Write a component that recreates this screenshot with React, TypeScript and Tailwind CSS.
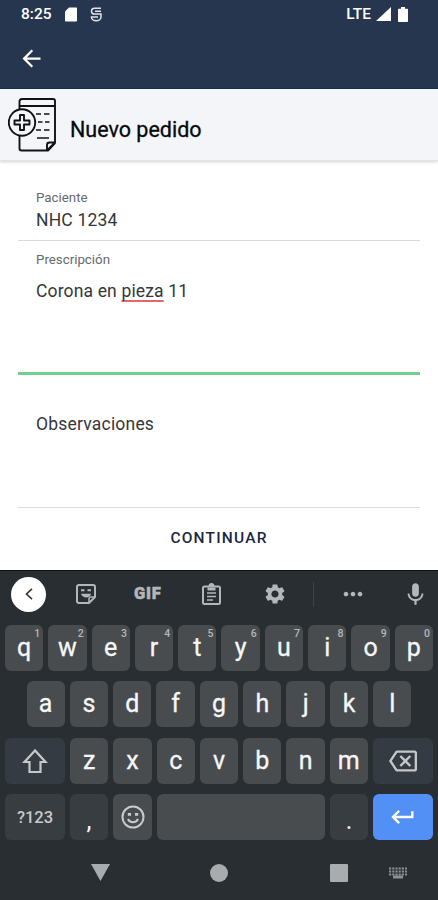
import type { ReactNode } from "react";
import { MdArrowBack, MdKeyboardReturn, MdMic, MdMoreHoriz, MdOutlineBackspace, MdSettings } from "react-icons/md";

const TOP_ROW = ["q", "w", "e", "r", "t", "y", "u", "i", "o", "p"];
const HOME_ROW = ["a", "s", "d", "f", "g", "h", "j", "k", "l"];
const BOTTOM_ROW = ["z", "x", "c", "v", "b", "n", "m"];

function StatusBar() {
  return (
    <div className="flex h-7 items-center pl-[21px] pr-[30px] text-white">
      <span className="w-[31px] whitespace-nowrap text-[15.500px] font-medium leading-7">8:25</span>
      <svg viewBox="0 0 12 15" className="ml-[13px] h-[15px] w-3" fill="currentColor" aria-hidden="true">
        <path d="M4 .5h7c.6 0 1 .4 1 1v12c0 .6-.4 1-1 1H1c-.6 0-1-.4-1-1v-9z" />
      </svg>
      <svg viewBox="0 0 12 15" className="ml-[13px] h-[15px] w-3" fill="none" stroke="#dfe3e8" strokeWidth="1.500" aria-hidden="true">
        <path d="M11 1.200H4.500a3 3 0 0 0-3 3c0 1.800 1.300 2.900 3 2.900H11v2.700c0 2.400-2.200 4-4.800 4s-4.800-1.500-4.800-3.800H8M11 4.200H5" />
      </svg>
      <span className="ml-auto text-[15.500px] font-medium leading-7">LTE</span>
      <svg viewBox="0 0 15 14" className="ml-[5px] h-3.5 w-[15px]" fill="currentColor" aria-hidden="true">
        <path d="M15 0v14H0z" />
      </svg>
      <svg viewBox="0 0 10 15" className="ml-[7px] h-[15px] w-2.5" fill="currentColor" aria-hidden="true">
        <path d="M3 0h4v1.700h2c.6 0 1 .4 1 1V14c0 .6-.4 1-1 1H1c-.6 0-1-.4-1-1V2.700c0-.6.4-1 1-1h2z" />
      </svg>
    </div>
  );
}

function OrderIcon() {
  return (
    <svg viewBox="0 0 48 54" className="h-[54px] w-12 shrink-0" fill="none" stroke="#111216" strokeWidth="1.9" strokeLinejoin="round" aria-hidden="true">
      <path d="M11.500 11V3.500C11.500 2 12.300 1 14 1h31c1.500 0 2 .8 2 2v42l-7 7.500H13.500c-1.500 0-2-.8-2-2V37" />
      <path d="M11.500 8H47M39 52.500V47c0-1.800.7-2.500 2.500-2.500H47M40 51.500l6.500-6.500" />
      <path d="M28 16h5M36 16h5.500M30 24h4.500M37 24h4.500M28 32h5M36 32h5.500M29 40h12" strokeWidth="1.7" />
      <circle cx="14" cy="24.500" r="13.200" fill="#f4f5f9" />
      <path d="M12 17h4v5.500h5.500v4H16V32h-4v-5.500H6.500v-4H12z" />
    </svg>
  );
}

function Key({ children, hint, className = "bg-[#484c4f]" }: { children?: ReactNode; hint?: string; className?: string }) {
  return (
    <div className={`relative flex h-[46px] min-w-0 flex-[38.5_1_0] items-center justify-center rounded-[6px] text-[25px] text-[#f5f6f7] ${className}`}>
      {children}
      {hint && <span className="absolute right-[3px] top-[3px] text-[10.500px] font-medium leading-[12px] text-[#b5b8ba]">{hint}</span>}
    </div>
  );
}

function Letter({ char, hint }: { char: string; hint?: string }) {
  return (
    <Key hint={hint}>
      <span className="-mt-[1px] text-[25px] leading-none [-webkit-text-stroke:0.3px_#f5f6f7]">{char}</span>
    </Key>
  );
}

function Toolbar() {
  return (
    <div className="flex h-[54px] items-center pb-[8px] pl-[11px] text-[#b3b7b9]">
      <div className="flex size-[35px] items-center justify-center rounded-full bg-white">
        <svg viewBox="0 0 8 12" className="h-3 w-2" fill="none" stroke="#303437" strokeWidth="1.6" aria-hidden="true">
          <path d="M7 .8 1.500 6 7 11.200" />
        </svg>
      </div>
      <svg viewBox="0 0 20 20" className="ml-[30px] size-5" fill="none" stroke="currentColor" strokeWidth="2" strokeLinejoin="round" aria-hidden="true">
        <path d="M3 1h14a2 2 0 0 1 2 2v10l-6 6H3a2 2 0 0 1-2-2V3a2 2 0 0 1 2-2z" />
        <path d="M13 19v-4a2 2 0 0 1 2-2h4" strokeWidth="1.500" />
        <path d="M5 6.200h3.500M11.500 6.200H15" strokeWidth="2" />
        <path d="M5 9.800h10c-.8 5-8.500 5-10 0z" fill="currentColor" stroke="none" />
      </svg>
      <span className="ml-[38px] w-[29px] text-[16.500px] font-black leading-5 tracking-[0.8px] [-webkit-text-stroke:0.5px_#b3b7b9]">GIF</span>
      <svg viewBox="0 0 19 22" className="ml-[39px] h-[22px] w-[19px]" fill="none" stroke="currentColor" strokeWidth="2" aria-hidden="true">
        <rect x="1" y="3.500" width="17" height="17.500" rx="1.500" />
        <path d="M5.500 6h8" strokeWidth="3" />
        <path d="M9.500 0a3 3 0 0 1 3 3.500h-6a3 3 0 0 1 3-3.500z" fill="currentColor" stroke="none" />
        <path d="M5 10h9M5 13.500h9M5 17h6" strokeWidth="1.700" />
      </svg>
      <MdSettings className="ml-[42px] size-6" />
      <span className="ml-[26px] h-[25px] w-px bg-[#3d4245]" />
      <MdMoreHoriz className="ml-[25px] size-7" />
      <MdMic className="ml-[35px] size-[27px]" />
    </div>
  );
}

function NavBar() {
  return (
    <div className="mt-[24px] flex h-[18px] items-center pl-[91px] text-[#a9acae]">
      <svg viewBox="0 0 19 17" className="h-[17px] w-[19px]" fill="currentColor" aria-hidden="true">
        <path d="M0 0h19L9.500 17z" />
      </svg>
      <span className="ml-[100px] size-[18px] rounded-full bg-current" />
      <span className="ml-[102px] size-[18px] rounded-[1px] bg-current" />
      <svg viewBox="0 0 18 12" className="ml-[41px] h-3 w-[18px]" fill="none" stroke="#8c9092" aria-hidden="true">
        <path d="M0 1.500h18M0 4.500h18M0 7.500h18" strokeWidth="2" strokeDasharray="2.200 1" />
        <path d="M4 10h10" strokeWidth="3" />
      </svg>
    </div>
  );
}

function Keyboard() {
  return (
    <div className="h-[330px] border-t border-[#0b0e10] bg-[#292e32]">
      <Toolbar />
      <div className="flex flex-col gap-[10.300px] px-[5px]">
        <div className="flex gap-[5px]">
          {TOP_ROW.map((char, i) => (
            <Letter key={char} char={char} hint={String((i + 1) % 10)} />
          ))}
        </div>
        <div className="flex gap-[5px] px-[21.500px]">
          {HOME_ROW.map((char) => (
            <Letter key={char} char={char} />
          ))}
        </div>
        <div className="flex gap-[5px]">
          <Key className="flex-none! w-[60px] bg-[#353b42]">
            <svg viewBox="0 0 26 26" className="size-[26px]" fill="none" stroke="#c5c8ca" strokeWidth="2.200" aria-hidden="true">
              <path d="M13 2.500 2.500 14H7.500v10h11V14h5z" />
            </svg>
          </Key>
          {BOTTOM_ROW.map((char) => (
            <Letter key={char} char={char} />
          ))}
          <Key className="flex-none! w-[60px] bg-[#353b42]">
            <MdOutlineBackspace className="size-7 text-[#c5c8ca]" />
          </Key>
        </div>
        <div className="flex gap-[5px]">
          <Key className="flex-none! w-[60px] bg-[#383d41]">
            <span className="mt-[2px] text-[16.500px] font-medium text-[#c8cacc]">?123</span>
          </Key>
          <Key className="flex-none! w-[38px] bg-[#383d41]">
            <span className="mt-2 leading-none">,</span>
          </Key>
          <Key className="flex-none! w-[39px] bg-[#484c4f]">
            <svg viewBox="0 0 24 24" className="size-6" fill="none" stroke="#c8cacc" strokeWidth="2" aria-hidden="true">
              <circle cx="12" cy="12" r="10.500" />
              <path d="M7 14c1.800 4.200 8.200 4.200 10 0" />
              <path d="M6.800 9.300H10M14 9.300h3.200" strokeWidth="2.700" />
            </svg>
          </Key>
          <Key />
          <Key className="flex-none! w-[38px] bg-[#383d41]">
            <span className="mt-2 leading-none">.</span>
          </Key>
          <Key className="flex-none! w-[60px] bg-[#5290f5]">
            <MdKeyboardReturn className="size-7 text-white" />
          </Key>
        </div>
      </div>
      <NavBar />
    </div>
  );
}

export default function App() {
  return (
    <div className="h-[900px] w-[438px] overflow-hidden bg-white font-['Roboto',sans-serif]">
      <header className="h-[89px] border-b border-[#17304a] bg-[#26364f]">
        <StatusBar />
        <MdArrowBack className="ml-[18px] mt-[17px] size-[27px] stroke-white text-white" />
      </header>

      <div className="flex h-[72px] border-b border-[#e2e3e5] bg-[#f4f5f9] pl-2 pt-[9px] shadow-[0_1px_3px_rgba(0,0,0,0.18)]">
        <OrderIcon />
        <h1 className="ml-[14px] mt-[18px] text-[21.500px] font-normal leading-[28px] text-[#08090b] [-webkit-text-stroke:0.3px_#08090b]">Nuevo pedido</h1>
      </div>

      <main className="flex h-[409px] flex-col px-[18px] text-[#35373a]">
        <div className="h-[80px] border-b border-[#d9dadc] pl-[18px] pt-[29px]">
          <div className="text-[13.300px] leading-4 text-[#66696f]">Paciente</div>
          <div className="mt-[3px] text-[17.500px] leading-[22px] tracking-[0.2px]">NHC 1234</div>
        </div>
        <div className="h-[134px] border-b-[3px] border-[#73cf8e] pl-[18px] pt-[11px]">
          <div className="text-[13.300px] leading-4 text-[#66696f]">Prescripción</div>
          <div className="mt-[12px] text-[17.500px] leading-[22px] tracking-[0.150px]">
            Corona en <span className="underline decoration-[#e5666b] decoration-2 underline-offset-[3px] [text-decoration-skip-ink:none]">pieza</span> 11
          </div>
        </div>
        <div className="h-[133px] border-b border-[#dcdddf] pl-[18px] pt-[38px] text-[17.500px] leading-[22px] tracking-[0.200px]">Observaciones</div>
        <button type="button" className="mt-[18px] text-[15.500px] font-medium leading-[24px] tracking-[1.200px] text-[#20263f]">
          CONTINUAR
        </button>
      </main>

      <Keyboard />
    </div>
  );
}
